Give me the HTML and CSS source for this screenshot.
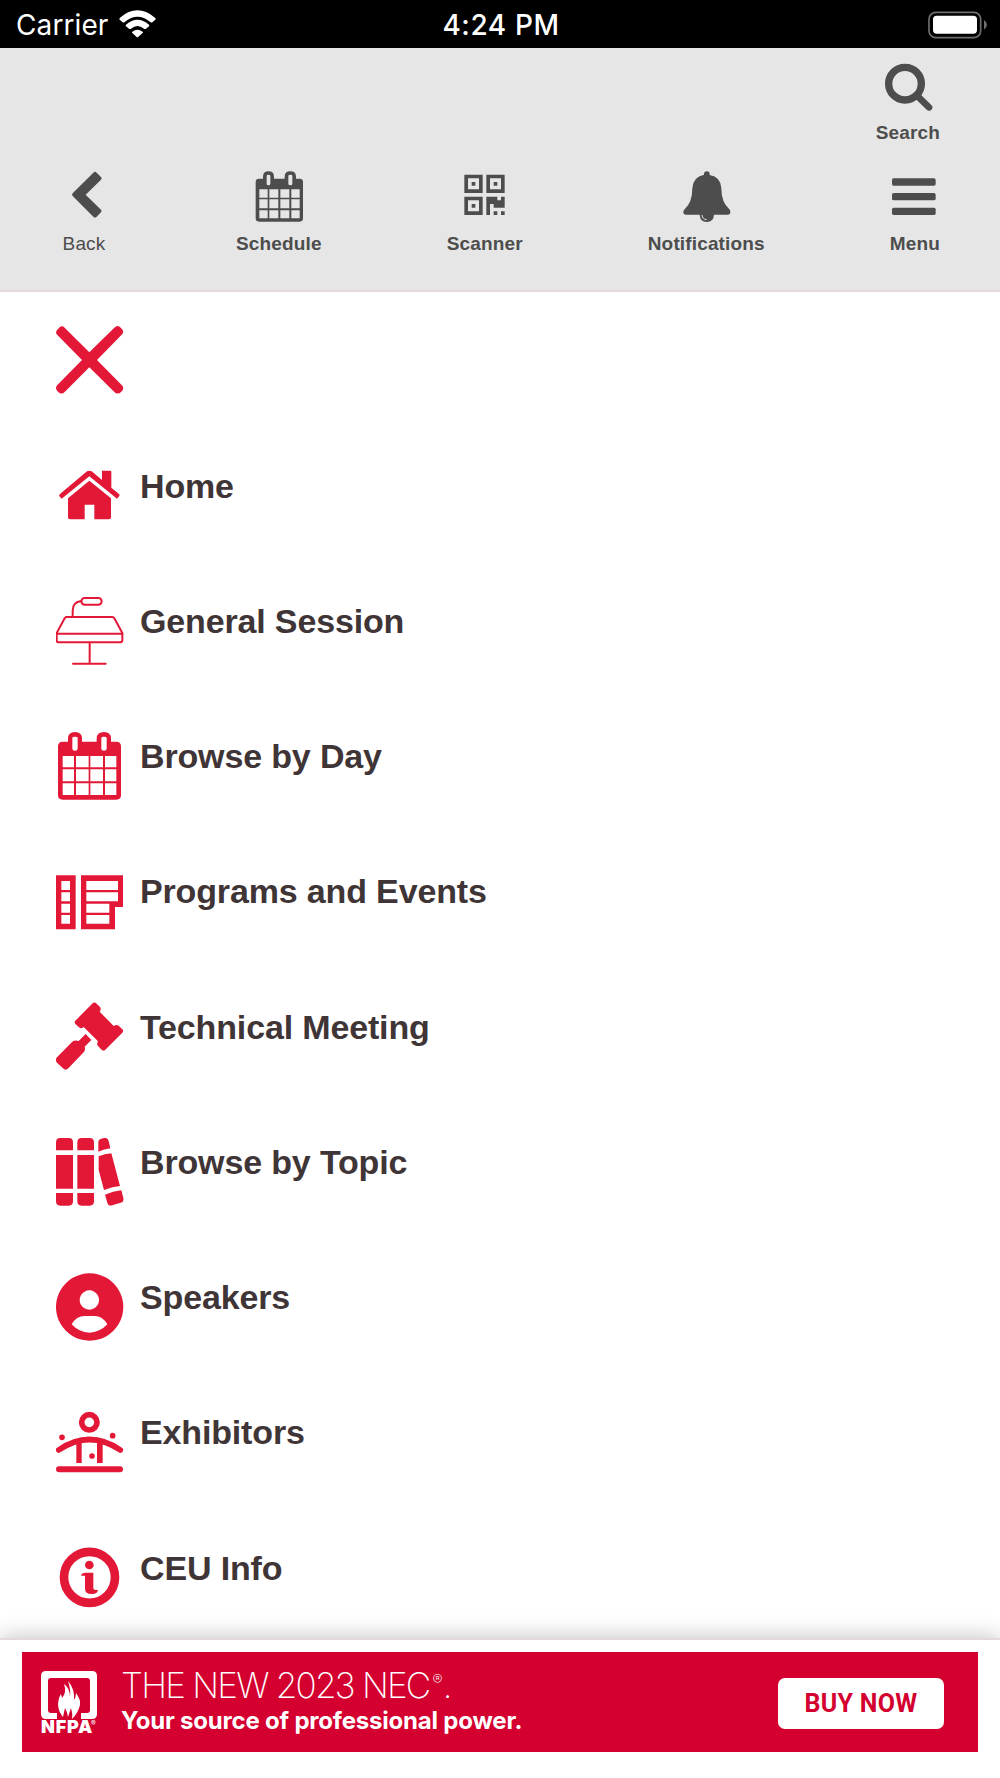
FILE: index.html
```html
<!DOCTYPE html>
<html lang="en">
<head>
  <meta charset="UTF-8">
  <meta name="viewport" content="width=device-width, initial-scale=1.0">
  <title>Conference Menu</title>
  <link rel="stylesheet" href="styles.css">
</head>
<body>
  <div class="status-bar">
    <div class="status-left">
      <span class="carrier">Carrier</span>
      <svg class="wifi" viewBox="360 29 111 84">
        <path d="M363 52 Q415 8 468 52 Q472 56 468 59 L461 65 Q458 68 454 65 Q415 33 377 65 Q373 68 370 65 L363 59 Q359 56 363 52Z"/>
        <path d="M381 73 Q415 44 450 73 Q452 76 450 78 L441 85 Q438 87 435 85 Q415 69 396 85 Q393 87 390 85 L381 78 Q379 76 381 73Z"/>
        <path d="M400 94 Q415 82 431 94 Q433 96 431 98 L418 109 Q415 112 412 109 L400 98 Q398 96 400 94Z"/>
      </svg>
    </div>
    <span class="time">4:24 PM</span>
    <div class="status-right">
      <svg class="battery" viewBox="1284 31 180 84">
        <rect x="1287" y="35" width="155" height="76" rx="20" fill="none" stroke="#6e6e6e" stroke-width="5"/>
        <rect x="1299" y="45" width="132" height="54" rx="11"/>
        <path d="M1452 58 Q1461 64 1461 72.500 Q1461 81 1452 87Z" fill="#6e6e6e"/>
      </svg>
    </div>
  </div>

  <header class="header">
    <div class="header-row header-top">
      <a class="nav-item">
        <svg class="nav-icon" viewBox="1148 190 153 153">
          <circle cx="1217" cy="252" r="49" fill="none" stroke="#4d4d4d" stroke-width="22"/>
          <path d="M1256 291 L1289 323" stroke="#4d4d4d" stroke-width="20" stroke-linecap="round"/>
        </svg>
        <span class="nav-label">Search</span>
      </a>
    </div>
    <nav class="header-row">
      <a class="nav-item back">
        <svg class="nav-icon icon-back" viewBox="186 514 132 153">
          <path d="M280 519 Q285 514 290 519 L303 532 Q307 536 303 540 L257 585 L303 630 Q307 634 303 638 L290 651 Q285 656 280 651 L218 589 Q214 585 218 581Z"/>
        </svg>
        <span class="nav-label light">Back</span>
      </a>
      <a class="nav-item">
        <svg class="nav-icon" viewBox="758 514 153 153">
          <path fill-rule="evenodd" d="M766 547 Q766 537 776 537 H788 V531 Q788 515 804.500 515 Q821 515 821 531 V537 H853 V531 Q853 515 870 515 Q887 515 887 531 V537 H898 Q908 537 908 547 V656 Q908 666 898 666 H776 Q766 666 766 656Z
            M799 529 V552 Q799 557 804.500 557 Q810 557 810 552 V529 Q810 525 804.500 525 Q799 525 799 529Z
            M864 529 V552 Q864 557 870 557 Q876 557 876 552 V529 Q876 525 870 525 Q864 525 864 529Z
            M777 569 H802 V594 H777Z M807 569 H834 V594 H807Z M840 569 H867 V594 H840Z M873 569 H898 V594 H873Z
            M777 599 H802 V626 H777Z M807 599 H834 V626 H807Z M840 599 H867 V626 H840Z M873 599 H898 V626 H873Z
            M777 632 H802 V656 H777Z M807 632 H834 V656 H807Z M840 632 H867 V656 H840Z M873 632 H898 V656 H873Z"/>
        </svg>
        <span class="nav-label">Schedule</span>
      </a>
      <a class="nav-item">
        <svg class="nav-icon" viewBox="1377 514 153 153">
          <path fill-rule="evenodd" d="M1393 525 H1448 V580 H1393Z M1404 536 V569 H1437 V536Z M1415 547 H1426 V558 H1415Z
            M1459 525 H1514 V580 H1459Z M1470 536 V569 H1503 V536Z M1481 547 H1492 V558 H1481Z
            M1393 591 H1448 V646 H1393Z M1404 602 V635 H1437 V602Z M1415 613 H1426 V624 H1415Z"/>
          <path d="M1459 591 H1492 V602 H1503 V591 H1514 V624 H1481 V613 H1470 V646 H1459Z M1481 635 H1492 V646 H1481Z M1503 635 H1514 V646 H1503Z"/>
        </svg>
        <span class="nav-label">Scanner</span>
      </a>
      <a class="nav-item">
        <svg class="nav-icon" viewBox="542 514 153 153">
          <path d="M611 525 V523 Q611 515 619.500 515 Q628 515 628 523 V526 Q662 532 663 566 Q663 608 687 629 Q690 632 690 637 Q690 645 682 645 H641 Q640 667 619 667 Q599 667 598 645 H557 Q549 645 549 637 Q549 632 553 629 Q576 608 576 566 Q577 532 611 525Z"/>
          <path d="M605 646 Q606 659 619 660" fill="none" stroke="#e6e6e6" stroke-width="3"/>
        </svg>
        <span class="nav-label">Notifications</span>
      </a>
      <a class="nav-item">
        <svg class="nav-icon icon-menu" viewBox="1171 514 150 153">
          <rect x="1177" y="536" width="131" height="22" rx="5"/>
          <rect x="1177" y="580" width="131" height="22" rx="5"/>
          <rect x="1177" y="624" width="131" height="22" rx="5"/>
        </svg>
        <span class="nav-label">Menu</span>
      </a>
    </nav>
  </header>

  <main class="menu">
    <div class="menu-item">
      <svg class="menu-icon" viewBox="48 48 204 204">
        <path d="M55 56 Q64 43 74 53 L148 127 L223 53 Q233 43 243 54 Q255 64 245 74 L171 150 L245 225 Q255 235 244 245 Q233 256 223 246 L148 172 L74 246 Q64 256 54 245 Q43 235 52 225 L126 150 L52 75 Q43 65 55 56Z"/>
      </svg>
    </div>
    <a class="menu-item">
      <svg class="menu-icon" viewBox="48 454 204 204">
        <path d="M60 553 L141 485 Q148 481 155 485 L186 511 V483 H210 Q214 483 214 487 V534 L237 553 Q240 556 238 559 L231 567 L148 500 L65 567 L58 560 Q56 556 60 553Z"/>
        <path d="M84 566 L148 513 L213 566 V623 Q213 629 207 629 H163 V585 H134 V629 H90 Q84 629 84 623Z"/>
      </svg>
      <span class="menu-label">Home</span>
    </a>
    <a class="menu-item">
      <svg class="menu-icon" viewBox="48 50 204 204">
        <g class="line">
          <rect x="124" y="53" width="61" height="20" rx="10"/>
          <path d="M124 62 Q98 65 98 91 V109"/>
          <path d="M78 110 H217 Q221 110 223 114 L247 158 V180 Q247 186 241 186 H56 Q50 186 50 180 V158 L74 114 Q76 110 80 110Z"/>
          <path d="M51 160 H247 M149 187 V249 M99 250 H197"/>
        </g>
      </svg>
      <span class="menu-label">General Session</span>
    </a>
    <a class="menu-item">
      <svg class="menu-icon" viewBox="48 456 204 204">
        <path fill-rule="evenodd" d="M54 499 Q54 485 68 485 H84 V476 Q84 456 105 456 Q126 456 126 476 V485 H170 V476 Q170 456 192 456 Q213 456 213 476 V485 H229 Q243 485 243 499 V646 Q243 659 229 659 H68 Q54 659 54 646Z
          M97 473 V506 Q97 512 105 512 Q113 512 113 506 V473 Q113 470 105 470 Q97 470 97 473Z
          M184 473 V506 Q184 512 192 512 Q200 512 200 506 V473 Q200 470 192 470 Q184 470 184 473Z
          M68 528 H102 V562 H68Z M108 528 H146 V562 H108Z M151 528 H189 V562 H151Z M195 528 H229 V562 H195Z
          M68 568 H102 V604 H68Z M108 568 H146 V604 H108Z M151 568 H189 V604 H151Z M195 568 H229 V604 H195Z
          M68 610 H102 V645 H68Z M108 610 H146 V645 H108Z M151 610 H189 V645 H151Z M195 610 H229 V645 H195Z"/>
      </svg>
      <span class="menu-label">Browse by Day</span>
    </a>
    <a class="menu-item">
      <svg class="menu-icon" viewBox="48 21 204 204">
        <path fill-rule="evenodd" d="M48 46 H107 V208 H48Z M64 63 H90 V90 H64Z M64 97 H90 V124 H64Z M64 131 H90 V158 H64Z M64 165 H90 V191 H64Z
          M123 46 H249 V141 H225 V208 H123Z M139 63 H234 V90 H139Z M139 97 H234 V124 H139Z M139 131 H208 V158 H139Z M139 165 H208 V191 H139Z"/>
      </svg>
      <span class="menu-label">Programs and Events</span>
    </a>
    <a class="menu-item">
      <svg class="menu-icon" viewBox="48 426 204 204">
        <path d="M106 482 L158 430 Q164 425 170 431 L180 441 Q185 447 179 455 L221 498 Q230 492 236 497 L247 508 Q252 513 247 518 L196 569 Q190 574 185 569 L174 558 Q169 552 174 544 L131 501 Q123 508 117 502 L106 492 Q102 487 106 482Z"/>
        <path d="M137 522 L154 540 L134 560 Q137 570 131 577 L85 625 Q77 633 69 625 L51 608 Q44 600 51 592 L96 546 Q104 539 116 543Z"/>
      </svg>
      <span class="menu-label">Technical Meeting</span>
    </a>
    <a class="menu-item">
      <svg class="menu-icon" viewBox="47 54 204 204">
        <path d="M47 91 V67 Q47 54 60 54 H85 Q98 54 98 67 V91Z M47 105 H98 V206 H47Z M47 219 H98 V244 Q98 257 85 257 H60 Q47 257 47 244Z"/>
        <path d="M111 91 V67 Q111 54 124 54 H148 Q161 54 161 67 V91Z M111 105 H161 V206 H111Z M111 219 H161 V244 Q161 257 148 257 H124 Q111 257 111 244Z"/>
        <path d="M174 95 V66 Q174 58 183 56 L191 54 Q202 52 205 63 L210 85 Q192 87 174 95Z M175 109 Q193 102 213 100 L239 198 Q218 200 191 210 L175 150Z M194 224 Q218 213 243 211 L249 234 Q252 245 241 248 L216 256 Q204 259 201 248Z"/>
      </svg>
      <span class="menu-label">Browse by Topic</span>
    </a>
    <a class="menu-item">
      <svg class="menu-icon" viewBox="48 458 204 204">
        <path fill-rule="evenodd" d="M149 459 A101 101 0 1 1 148.900 459Z M148 510 A29 29 0 1 0 148.100 510Z M95 612 Q109 587 134 587 H163 Q188 587 202 612 Q180 636 148 637 Q117 636 95 612Z"/>
      </svg>
      <span class="menu-label">Speakers</span>
    </a>
    <a class="menu-item">
      <svg class="menu-icon" viewBox="48 54 204 204">
        <circle cx="148" cy="97" r="23" fill="none" stroke="#e31837" stroke-width="17"/>
        <circle cx="66" cy="142" r="8.500"/>
        <circle cx="218" cy="137" r="8.500"/>
        <circle cx="156" cy="198" r="8.500"/>
        <path d="M56 180 Q148 117 241 180" fill="none" stroke="#e31837" stroke-width="17" stroke-linecap="round"/>
        <path d="M109 153 H125 V219 H109Z M171 153 H188 V219 H171Z"/>
        <rect x="48" y="229" width="201" height="18" rx="9"/>
      </svg>
      <span class="menu-label">Exhibitors</span>
    </a>
    <a class="menu-item">
      <svg class="menu-icon" viewBox="48 459 204 204">
        <circle cx="148.500" cy="562" r="76.500" fill="none" stroke="#e31837" stroke-width="26"/>
        <circle cx="148" cy="525" r="13"/>
        <path d="M123 557 Q125 548 137 548 H160 V594 Q160 601 174 600 Q172 612 157 612 Q135 613 135 596 V557Z"/>
      </svg>
      <span class="menu-label">CEU Info</span>
    </a>
  </main>

  <footer class="footer">
    <div class="banner">
      <div class="logo">
        <svg class="logo-mark" viewBox="0 0 56 49">
          <path d="M5 0 H51 Q56 0 56 5 V43 Q56 48 51 48 H40 V42 H46 Q49 42 49 39 V10 Q49 7 46 7 H10 Q7 7 7 10 V39 Q7 42 10 42 H16 V48 H5 Q0 48 0 43 V5 Q0 0 5 0Z"/>
          <path d="M22 46 Q17 40 17 33 Q18 25 20 23 L21 27 Q26 21 23 13 Q29 17 29 26 Q30 19 27 10 Q34 18 33 29 Q35 26 35 22 Q40 29 39 34 Q37 42 31 48 Q32 43 30 37 L27 46 Q26 40 24 37Z"/>
        </svg>
        <span class="logo-text">NFPA<sup class="logo-reg">®</sup></span>
      </div>
      <div class="banner-text">
        <div class="banner-title">THE NEW 2023 NEC<sup class="reg">®</sup>.</div>
        <div class="banner-sub">Your source of professional power.</div>
      </div>
      <button class="buy-btn">BUY NOW</button>
    </div>
  </footer>
</body>
</html>
```

FILE: styles.css
```css
* {
  box-sizing: border-box;
}
body {
  margin: 0;
  width: 1000px;
  height: 1778px;
  display: flex;
  flex-direction: column;
  overflow: hidden;
  background: #fff;
  font-family: "Liberation Sans", Arial, sans-serif;
}
svg {
  display: block;
  flex-shrink: 0;
}

/* status bar */
.status-bar {
  height: 48px;
  flex-shrink: 0;
  display: grid;
  grid-template-columns: 1fr auto 1fr;
  align-items: center;
  padding: 3px 14px 0 16px;
  background: #000;
  color: #fff;
  font-family: Inter, sans-serif;
  font-size: 28px;
  line-height: 45px;
}
.status-left {
  display: flex;
  align-items: center;
  gap: 11px;
}
.carrier {
  font-weight: 400;
  letter-spacing: 0.1px;
}
.wifi {
  width: 37px;
  height: 28px;
  margin-bottom: 3px;
  fill: #fff;
}
.time {
  font-weight: 500;
  letter-spacing: 0.6px;
}
.status-right {
  display: flex;
  justify-content: flex-end;
}
.battery {
  width: 60px;
  height: 28px;
  margin: 0 -2px 2px 0;
  fill: #fff;
}

/* header */
.header {
  height: 244px;
  flex-shrink: 0;
  padding: 15px 60px 0 62px;
  background: #e6e6e6;
  border-bottom: 2px solid #e5d9dd;
  color: #4d4d4d;
}
.header-row {
  display: flex;
  justify-content: space-between;
}
.header-top {
  height: 108px;
  justify-content: flex-end;
}
.nav-item {
  display: flex;
  flex-direction: column;
  align-items: center;
}
.nav-item.back {
  margin-right: 5px;
}
.nav-icon {
  width: 51px;
  height: 51px;
  fill: #4d4d4d;
}
.icon-back {
  width: 44px;
}
.icon-menu {
  width: 50px;
}
.nav-label {
  margin-top: 11px;
  font-size: 19px;
  line-height: 22px;
  font-weight: bold;
  letter-spacing: 0.15px;
}
.header-top .nav-label {
  margin-top: 8px;
}
.nav-label.light {
  font-weight: normal;
}

/* menu */
.menu {
  flex: 1;
  min-height: 0;
  padding: 34px 56px 0;
  overflow: hidden;
}
.menu-item {
  height: 135.25px;
  display: flex;
  gap: 16.5px;
  color: #3f3536;
}
.menu-icon {
  width: 68px;
  height: 68px;
  margin-left: -0.5px;
  fill: #e31837;
}
.line {
  fill: none;
  stroke: #e31837;
  stroke-width: 6;
  stroke-linecap: round;
  stroke-linejoin: round;
}
.menu-label {
  padding-top: 4.4px;
  font-size: 34px;
  line-height: 40px;
  font-weight: bold;
  letter-spacing: -0.15px;
}

/* footer banner */
.footer {
  height: 140px;
  flex-shrink: 0;
  padding: 12px 22px 0;
  background: #fff;
  border-top: 2px solid #e5d9dd;
  box-shadow: 0 0 22px rgba(0, 0, 0, 0.26);
}
.banner {
  height: 100px;
  display: flex;
  align-items: flex-start;
  background: #d4002f;
  color: #fff;
}
.logo {
  width: 60px;
  margin: 19px 0 0 19px;
}
.logo-mark {
  width: 56px;
  height: 49px;
  fill: #fff;
}
.logo-text {
  display: block;
  font-family: Inter, sans-serif;
  font-size: 18px;
  line-height: 14px;
  font-weight: 900;
  letter-spacing: 0.8px;
  white-space: nowrap;
}
.logo-reg {
  margin-left: -2px;
  font-size: 7px;
  line-height: 0;
  font-weight: normal;
}
.banner-text {
  margin: 15px 0 0 20px;
  font-family: Inter, sans-serif;
  white-space: nowrap;
}
.banner-title {
  font-size: 35px;
  line-height: 37px;
  font-weight: 200;
  letter-spacing: -1.75px;
}
.reg {
  font-size: 15px;
  line-height: 0;
  margin: 0 2px 0 3px;
}
.banner-sub {
  font-size: 24px;
  line-height: 33px;
  font-weight: 700;
  letter-spacing: -0.2px;
}
.buy-btn {
  width: 166px;
  height: 51px;
  margin: 26px 34px 0 auto;
  padding: 0;
  border: none;
  border-radius: 7px;
  background: #fff;
  color: #d4002f;
  font-family: Roboto, sans-serif;
  font-size: 25px;
  font-weight: 700;
  letter-spacing: 0.3px;
}
```
